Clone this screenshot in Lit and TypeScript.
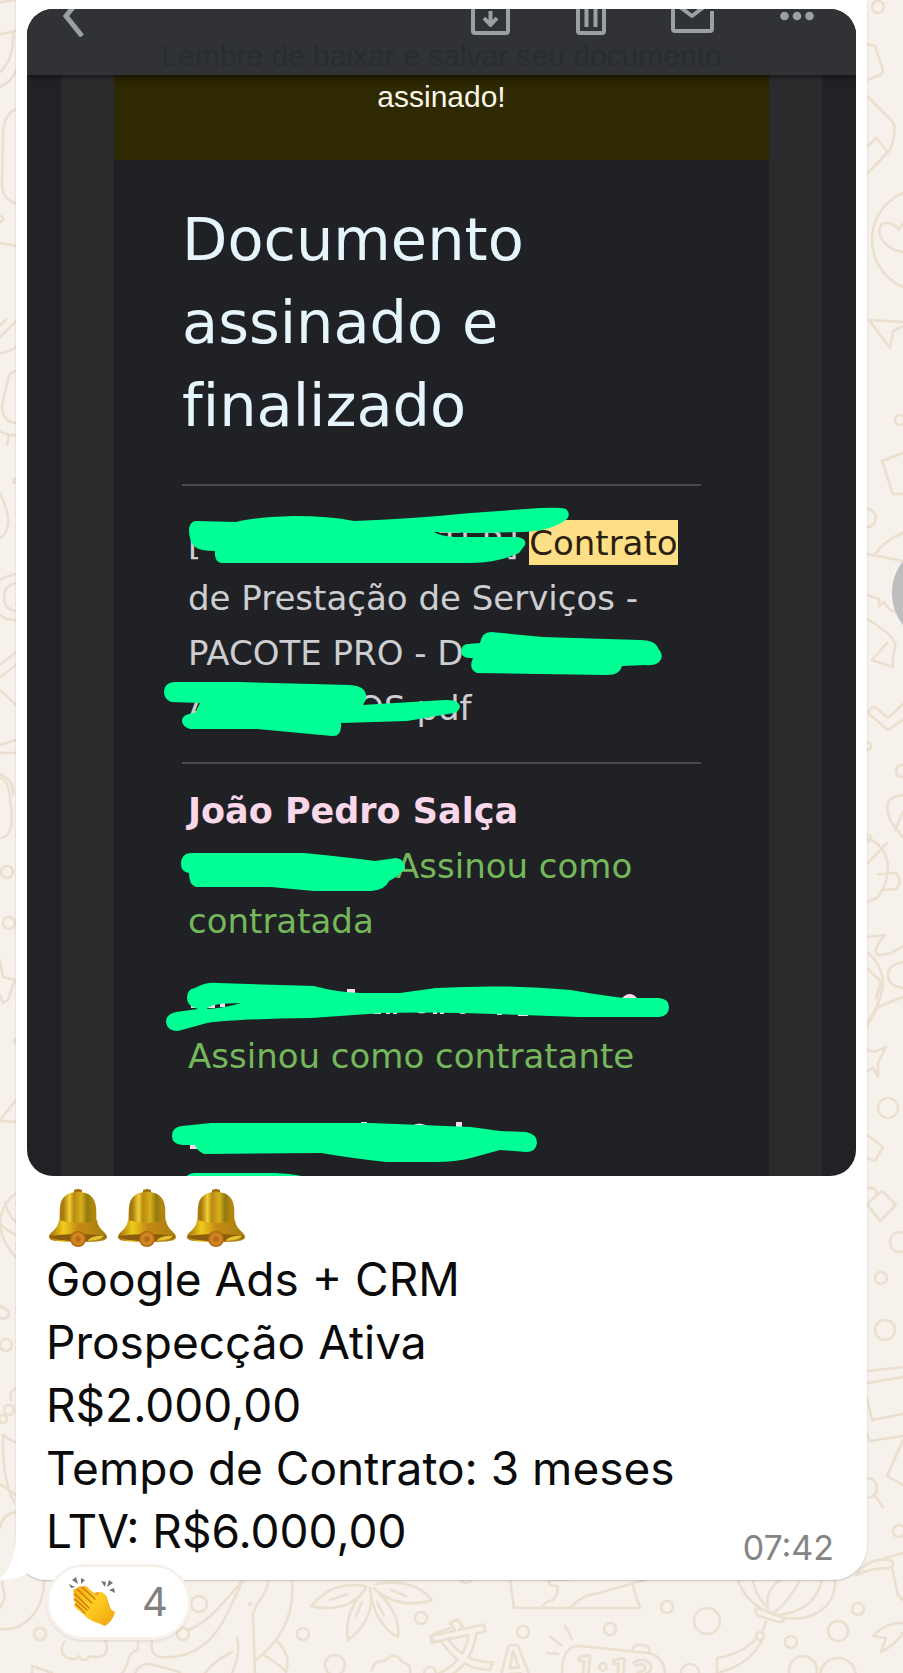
import { LitElement, html, css, svg } from "lit";
import { customElement } from "lit/decorators.js";

@customElement("chat-wallpaper")
class ChatWallpaper extends LitElement {
  static styles = css`
    :host { position: absolute; inset: 0; overflow: hidden; background: #f6f1eb; }
    .art { display: block; fill: none; stroke: #ebdfcf; stroke-width: 2.600; stroke-linecap: round; stroke-linejoin: round; }
    .glyph { font-family: "Noto Sans CJK SC", "Inter", sans-serif; font-weight: 700; }
  `;
  render() {
    const rings = [
      [40, 1634, 6], [183, 1634, 6], [199, 1604, 8], [250, 1604, 1], [303, 1634, 6], [335, 1665, 10], [421, 1618, 6], [430, 1673, 6],
      [466, 1577, 6], [667, 1607, 6], [523, 1632, 6], [610, 1629, 6], [707, 1621, 13], [858, 1609, 6], [838, 1631, 10], [791, 1642, 6],
      [690, 1673, 9], [803, 1670, 14], [838, 1676, 18], [760, 1636, 4], [878, 7, 6], [923, 240, 51], [900, 420, 5], [867, 518, 9],
      [867, 746, 4], [902, 771, 6], [867, 838, 4], [888, 1108, 10], [900, 1242, 10], [881, 1278, 6], [885, 1330, 10], [867, 1488, 10],
      [899, 1531, 6], [0, 219, 3], [15, 481, 2], [7, 872, 6], [9, 923, 6], [16, 1041, 2], [6, 1345, 6], [9, 1410, 5], [3, 1419, 4],
    ];
    return html`<svg class="art" width="903" height="1673" viewBox="0 0 903 1673" aria-hidden="true">
      ${rings.map(([x, y, r]) => svg`<circle cx=${x} cy=${y} r=${r}></circle>`)}
      <path d="M0 2L16 0M0 34L16 31M13 33Q14 60 0 72M0 87Q12 82 16 70M16 109Q4 115 3 132L2 185Q3 200 16 203M0 243L16 246M0 325L6 320M0 337L15 322M0 353Q10 352 16 347M16 371Q9 372 8 380L2 405Q2 422 16 423M0 431Q8 436 16 435M9 435l-2 10M0 493Q10 515 8 525Q6 535 0 538M0 580Q6 576 16 574M16 583Q4 585 4 597Q4 610 16 611M0 615Q6 620 16 620M0 665L16 652M0 677L16 665M0 690L16 705M0 745L16 740M0 753H16M0 774Q14 780 13 795M0 778Q9 780 10 800"/>
      <path d="M10 800Q14 825 9 832Q6 838 0 838M0 960L3 977L15 980L8 1000L3 1003L0 995M0 1120L16 1100M0 1121L16 1122M16 1193Q0 1205 0 1225Q3 1245 16 1257M5 1203Q8 1215 16 1222M1 1225q8 7 15 10M0 1306Q10 1310 9 1315Q6 1320 0 1318M16 1388Q9 1392 11 1400M16 1442Q8 1440 4 1435M3 1435Q2 1480 14 1502M0 1484L16 1495M16 1512Q2 1514 0 1528"/>
      <path d="M867 44L875 46L883 70Q883 75 877 76L867 80M867 96L893 122Q897 132 890 150L867 174M867 147L876 138L887 151M903 224Q900 226 899 230Q892 220 882 224Q876 232 884 242Q890 250 903 252M903 322L869 320L890 348L893 331L903 326M903 453L882 461L893 494H903M867 554L903 561M876 553Q885 540 903 533M867 595L879 599V606L884 602Q888 610 895 612M867 619Q898 637 895 648Q892 660 893 667L872 660L887 643M903 704L888 718L875 707Q868 708 869 714L888 730L903 720M903 795Q890 797 888 803Q886 810 890 820L903 838M903 812L895 830"/>
      <path d="M867 838Q886 845 888 866Q888 885 877 898L867 902M867 864L887 843M878 874L896 873Q903 882 896 889L882 890M867 937L885 935Q872 950 877 954Q885 958 903 946M903 962Q888 965 888 975Q888 986 903 988M867 952Q883 965 883 985Q880 1005 867 1023M867 1026L878 1007L903 997M867 968L881 982L876 998M867 1050L874 1052L886 1047L878 1063V1077L873 1068L867 1072M867 1135L883 1147L875 1161L867 1158M867 1204L880 1221L896 1205L882 1191ZM867 1188Q876 1186 877 1195M867 1371L903 1367M867 1383L903 1377M867 1398L872 1420L903 1414M867 1434L870 1441L903 1436M903 1440L887 1476L903 1485M875 1496L883 1507"/>
      <path d="M44 1580C44 1610 25 1632 0 1629M0 1608L5 1598L2 1582M64 1642q-6 12 4 16q10 3 10-2q6 8 12 0q16 4 17-8q0-6-3-8M32 1673V1666L52 1673M138 1642V1650C126 1652 130 1665 122 1673M135 1673Q142 1662 150 1664L180 1672M152 1642Q150 1655 160 1657C195 1660 215 1640 228 1612L243 1580M243 1580C225 1600 210 1622 188 1630M237 1638C240 1650 238 1660 232 1673M232 1652Q215 1660 205 1673M268 1580C268 1595 254 1603 253 1615L255 1673M292 1580C296 1620 275 1645 256 1660M276 1640Q292 1655 286 1672Q280 1665 264 1655"/>
      <path d="M366 1586C340 1582 325 1590 311 1606C335 1612 355 1605 366 1588C350 1605 345 1622 348 1640C368 1625 374 1608 370 1588C372 1608 380 1628 398 1637C400 1620 392 1605 374 1588C390 1605 415 1606 432 1600C420 1585 400 1580 376 1584M330 1600l17-6M356 1616l6-14M377 1602l7 14M391 1590l15 6M372 1670Q374 1660 384 1661Q396 1650 402 1662Q412 1664 410 1673M450 1628L434 1634Q428 1640 436 1642L450 1638"/>
      <path d="M510 1580L514 1608H640L633 1586M543 1608q0-6 10-8q6-6 4-14q-10 0-8-6q18 0 36-2M570 1608Q582 1595 595 1594L645 1580M562 1673C562 1655 568 1645 580 1646L648 1653Q664 1656 665 1673M632 1651q2-8 10-6q8 0 8 8M551 1637l10 8M565 1626l7 13M547 1653l11 1"/>
      <path d="M738 1580C745 1600 760 1612 785 1618M835 1580C836 1605 815 1622 785 1618M753 1580Q755 1595 768 1608M780 1580Q764 1592 768 1608M800 1580Q790 1600 775 1612M822 1580Q815 1610 780 1615M757 1608l24 8q6 6-2 6l-20-6q-6-4-2-8M766 1622l-4 10M756 1639Q740 1655 717 1658V1673Q750 1665 762 1640M856 1575Q870 1555 892 1561Q896 1566 888 1568Q870 1568 857 1575M885 1558L903 1553M892 1568L898 1595L903 1600M903 1623Q885 1622 873 1636L886 1638L881 1652Q895 1645 903 1633"/>
      <text class="glyph" x="431" y="1671" font-size="60" transform="rotate(-12 460 1650)">文</text>
      <text class="glyph" x="498" y="1684" font-size="52" transform="rotate(-4 510 1670)">A</text>
      <text class="glyph" x="574" y="1684" font-size="38" transform="rotate(5 600 1670)">1:13</text>
    </svg>`;
  }
}

@customElement("bell-emoji")
class BellEmoji extends LitElement {
  static styles = css`
    :host { display: block; }
    .bell { display: block; width: 60px; height: 58px; }
  `;
  render() {
    return html`<svg class="bell" viewBox="0 0 60 58" role="img" aria-label="sino">
      <defs>
        <linearGradient id="body" x1="0" x2="1">
          <stop offset="0.150" stop-color="#a87a0c"/><stop offset=".3" stop-color="#f0cf38"/><stop offset=".4" stop-color="#b88a10"/>
          <stop offset=".58" stop-color="#d8ae1c"/><stop offset=".72" stop-color="#8f7a10"/><stop offset=".85" stop-color="#b2860c"/>
        </linearGradient>
        <linearGradient id="rim" x1="0" x2="1">
          <stop offset="0" stop-color="#a06a08"/><stop offset=".25" stop-color="#f0cb1c"/><stop offset=".5" stop-color="#c58a12"/><stop offset="1" stop-color="#a87f10"/>
        </linearGradient>
        <radialGradient id="clap"><stop offset="0" stop-color="#a85c10"/><stop offset=".6" stop-color="#d98a28"/><stop offset="1" stop-color="#a5640c"/></radialGradient>
      </defs>
      <path d="M26 1q4-2 8 0v5h-8z" fill="#a3740c"/>
      <path d="M30 3C42 3 47 9 48 18C49 27 47 33 51 38H9C13 33 11 27 12 18C13 9 18 3 30 3Z" fill="url(#body)"/>
      <path d="M11 31Q30 37 49 31C50 41 59 43 59 48C59 53 45 53 30 53C15 53 1 53 1 48C1 43 10 41 11 31Z" fill="url(#rim)"/>
      <path d="M2 47Q30 43 58 47Q56 52 30 52Q4 52 2 47Z" fill="#8a5c0c"/>
      <path d="M40 51Q46 46 56 47Q55 51 40 52Z" fill="#e4c42c"/>
      <circle cx="30" cy="50" r="8" fill="url(#clap)"/>
    </svg>`;
  }
}

@customElement("signed-photo")
class SignedPhoto extends LitElement {
  static styles = css`
    :host { display: block; }
    .photo { position: relative; overflow: hidden; margin: 0; border-radius: 26px; background: #202226; font-family: "DejaVu Sans", sans-serif; font-variant-ligatures: none; }
    .head { position: relative; height: 66px; overflow: hidden; background: #303235; box-shadow: 0 1px 6px #0009; }
    .tools { display: flex; align-items: flex-start; gap: 65px; height: 28px; padding: 0 42px 0 34px; }
    .back { margin-right: auto; }
    .tool { display: block; padding: 0; border: 0; background: none; color: #9ba0a6; cursor: pointer; }
    .icon { display: block; fill: none; stroke: currentColor; stroke-width: 4; stroke-linejoin: round; }
    .chevron { stroke-width: 5; stroke-linejoin: miter; }
    .ghost { margin: 0; color: #292c31; font: 30px/38px "Liberation Sans", sans-serif; text-align: center; white-space: nowrap; }
    .mail { margin: 0 34px; padding: 0 53px; background: #292b2c; }
    .card { background: #202125; }
    .banner { margin: 0; height: 85px; background: linear-gradient(#262100, #2e2900 14px); color: #fbf7ea; font: 30px/43px "Liberation Sans", sans-serif; text-align: center; }
    .body { padding: 38px 68px 12px; color: #cdced1; font-size: 34px; line-height: 55px; }
    .title { margin: 0 0 37px; color: #e6f5fb; font-size: 59px; line-height: 83px; font-weight: 400; }
    .rule { height: 2px; margin: 0; border: 0; background: #4a4b4e; }
    .file { margin: 0; padding: 30px 0 26px 6px; white-space: nowrap; }
    .people { margin: 0; padding: 20px 0 0 6px; list-style: none; white-space: nowrap; }
    .person { margin: 0 0 25px; }
    .last { margin: 0; }
    .name { display: block; min-height: 55px; color: #fbd7ea; font-size: 35px; font-weight: 700; }
    .role { color: #75b85b; }
    .mark { padding: 3px 0 2px; background: #ffdf86; color: #2b1f10; }
    .gap { display: inline-block; }
    .wide { width: 238px; }
    .mid { width: 146px; }
    .half { width: 208px; }
    .ink { position: absolute; top: 0; left: 0; }
  `;
  render() {
    return html`<figure class="photo">
      <header class="head">
        <div class="tools">
          <button class="tool back" aria-label="Voltar"><svg class="icon chevron" width="26" height="28"><path d="M14-4L5 7L21 27"/></svg></button>
          <button class="tool" aria-label="Arquivar"><svg class="icon" width="40" height="28"><path d="M2-4V22Q2 24 4 24H35Q37 24 37 22V-4"/><path d="M19.500 2V15M13 9L19.500 16L26 9"/></svg></button>
          <button class="tool" aria-label="Excluir"><svg class="icon" width="30" height="28"><path d="M2-4V22Q2 24 4 24H26Q28 24 28 22V-4M10.500-2V18M19.500-2V18"/></svg></button>
          <button class="tool" aria-label="Marcar como não lida"><svg class="icon" width="44" height="28"><path d="M2-4V20Q2 22 4 22H39Q41 22 41 20V2M9-2L21 7L34-3"/></svg></button>
          <button class="tool" aria-label="Mais"><svg width="34" height="28" fill="currentColor"><circle cx="4.500" cy="7" r="4.300"/><circle cx="17" cy="7" r="4.300"/><circle cx="29.500" cy="7" r="4.300"/></svg></button>
        </div>
        <p class="ghost">Lembre de baixar e salvar seu documento</p>
      </header>
      <div class="mail"><div class="card">
        <p class="banner">assinado!</p>
        <div class="body">
          <h1 class="title">Documento<br>assinado e<br>finalizado</h1>
          <hr class="rule">
          <p class="file">[<span class="gap wide"></span>TER] <mark class="mark">Contrato</mark><br>de Prestação de Serviços -<br>PACOTE PRO - D<br>A<span class="gap mid"></span>OS.pdf</p>
          <hr class="rule">
          <ul class="people">
            <li class="person"><b class="name">João Pedro Salça</b><span class="role"><span class="gap half"></span>Assinou como<br>contratada</span></li>
            <li class="person"><b class="name"></b><span class="role">Assinou como contratante</span></li>
            <li class="person last"><b class="name"></b></li>
          </ul>
        </div>
      </div></div>
      <svg class="ink" width="829" height="1169" viewBox="27 9 829 1169" aria-hidden="true">
        <path fill="#fbd7ea" d="M191 1003h6v5h-6zM207 1003h8v5h-8zM220 1003h5v4h-5zM347 989h8v4h-8zM371 1009q5 7 10 0v5h-8zM386 1008h4v6h-4zM393 1008h4v6h-4zM414 1010q8 7 15 0zM433 1010h4v4h-4zM440 1010h4v4h-4zM455 1010q8 8 15 0zM497 1010h5v5h-5zM518 1012h10v4h-10zM622 998q8-8 15 0zM190 1143h7v6h-7zM361 1122h6v4h-6zM410 1127q9-7 19 0zM456 1122h6v7h-6z"/>
        <g fill="#00ff94">
          <path d="M189 530Q189 523 195 521L236 522Q255 517 293 516Q330 516 354 521Q410 519 471 513L540 508Q561 507 566 509Q571 514 567 519Q554 530 525 532L479 533L434 532Q440 536 454 537L518 537Q527 539 525 545L519 553Q500 562 471 563L364 563L221 563Q214 561 215 551Q200 551 195 547Q189 541 189 530Z"/>
          <path d="M461 651Q462 644 468 644L480 643Q482 632 491 632L543 637L640 640Q655 640 658 648Q665 657 659 662Q654 666 645 665L622 666Q620 675 607 675L477 673Q468 669 473 658Q461 659 461 651Z"/>
          <path d="M164 692Q164 683 174 682L239 682L350 685Q365 686 366 695Q367 701 362 705L445 700Q458 699 460 706Q460 713 448 714L407 721L341 723Q342 737 332 736L257 729L190 729Q182 726 182 721Q182 714 195 713L200 703L171 702Q164 699 164 692Z"/>
          <path d="M181 864Q181 854 190 853L304 853Q345 857 375 861L396 858Q405 859 405 869L396 877L389 881Q385 890 371 891L314 891L271 887L196 887Q189 885 189 873Q181 872 181 864Z"/>
          <path fill-rule="evenodd" d="M187 998Q187 989 195 988Q205 982 218 983L314 986Q335 992 361 993L400 993L436 988Q507 984 571 990Q605 996 625 998L659 998Q669 999 669 1007Q669 1016 659 1017H579L464 1013Q420 1012 382 1013L311 1018Q235 1019 207 1023L178 1031Q167 1031 166 1022Q166 1014 176 1012L198 1009Q187 1006 187 998ZM207 1009Q210 1003 241 1003Q225 1008 207 1009Z"/>
          <path d="M172 1136Q172 1127 182 1126L211 1123H371L471 1127L500 1131L526 1132Q537 1134 537 1143Q536 1152 526 1152L500 1150L471 1158Q455 1162 436 1162H386Q350 1158 321 1153L204 1154Q197 1151 195 1145H182Q172 1144 172 1136Z"/>
          <path d="M184 1180Q187 1173 195 1173H275Q300 1174 316 1180Z"/>
        </g>
      </svg>
    </figure>`;
  }
}

@customElement("app-root")
class AppRoot extends LitElement {
  static styles = css`
    :host { display: block; position: relative; overflow: hidden; min-height: 100vh; font-family: "Inter", "Liberation Sans", sans-serif; }
    .thread { position: relative; padding: 0 36px 0 16px; }
    .bubble { position: relative; padding: 9px 11px 17px; border-radius: 0 0 34px 30px; background: #fff; box-shadow: 0 1px 2px #0003; }
    .tail { position: absolute; left: -16px; bottom: 0; }
    .caption { position: relative; display: flex; align-items: flex-end; justify-content: space-between; padding: 12px 22px 0 19px; }
    .text { margin: 0; color: #0b0b0b; font-size: 46px; line-height: 63px; }
    .bells { display: flex; align-items: center; gap: 9px; height: 60px; padding: 0 2px; }
    .time { color: #848484; font-size: 34px; line-height: 31px; }
    .reaction { position: relative; display: flex; align-items: center; gap: 25px; margin: -16px 0 33px 30px; padding: 0 20px; height: 76px; border: 3px solid #f6f1eb; border-radius: 38px; background: #fff; box-shadow: 0 2px 2px #0001; color: #808080; font: 40px/48px "Inter", sans-serif; cursor: pointer; }
    .clap { display: block; }
    .forward { position: absolute; top: 541px; left: calc(100% - 11px); width: 104px; height: 104px; padding: 0; border: 0; border-radius: 50%; background: #bcbdbc; }
  `;
  render() {
    return html`<chat-wallpaper></chat-wallpaper>
      <main class="thread">
        <article class="bubble">
          <svg class="tail" width="60" height="60" viewBox="0 0 60 60" fill="#fff" aria-hidden="true"><path d="M16 0V14C16 36 9 52 0 58V60C12 60 24 56 29 52C35 57 42 60 52 60H60V0Z"/></svg>
          <signed-photo></signed-photo>
          <div class="caption">
            <div>
              <div class="bells"><bell-emoji></bell-emoji><bell-emoji></bell-emoji><bell-emoji></bell-emoji></div>
              <p class="text">Google Ads + CRM<br>Prospecção Ativa<br>R$2.000,00<br>Tempo de Contrato: 3 meses<br>LTV: R$6.000,00</p>
            </div>
            <time class="time">07:42</time>
          </div>
        </article>
        <button class="reaction" aria-label="Reação: 4 aplausos">
          <svg class="clap" width="48" height="50" viewBox="0 0 48 50" aria-hidden="true">
            <defs><linearGradient id="skin" x1="0" y1="0" x2="1" y2="1"><stop offset="0" stop-color="#f3ab10"/><stop offset=".45" stop-color="#ffcf22"/><stop offset="1" stop-color="#f0a010"/></linearGradient></defs>
            <path d="M25 17Q28 13 32 17Q36 15 38 21L42 33L34 34Z" fill="#eda414"/>
            <path d="M5 16Q3 11 8 12Q9 8 13 10Q17 7 20 12L29 19Q30 13 34 16Q37 18 38 23L41 32L46 35Q44 44 36 49L29 46Q21 44 15 38L7 31Q3 27 7 26Q2 22 6 21Q3 18 5 16Z" fill="url(#skin)"/>
            <path d="M8 12L23 26M13 10L26 22M6 17L20 31M6 22L18 33M7 27L16 36" fill="none" stroke="#cf7a10" stroke-width="1.500" stroke-linecap="round"/>
            <path d="M0 7l6 3-4 1zM3 3l6 4-2-7zM12 7V1l4 2zM32 4l5 1-1 5zM38 10l2-7 4 3zM40 13l5-2 1 5z" fill="#747474"/>
          </svg>
          4
        </button>
        <button class="forward" aria-label="Encaminhar"></button>
      </main>`;
  }
}
